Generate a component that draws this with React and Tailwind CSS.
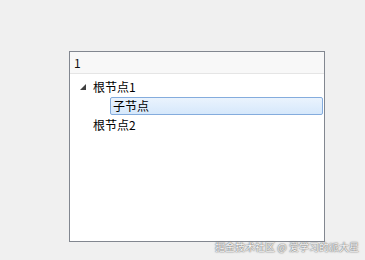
const FONT = { fontFamily: '"Noto Sans CJK SC", "Noto Sans", sans-serif' };

function Caret() {
  return (
    <svg width="6" height="6" viewBox="0 0 6 6" className="block">
      <path d="M6 0 L6 6 L0 6 Z" fill="#404040" />
    </svg>
  );
}

function TreeRow({ label, depth = 0, expanded, selected }) {
  return (
    <div className="flex h-[18px] items-center" style={{ paddingLeft: depth * 17 }}>
      <div className="flex w-[23px] justify-center pl-[2px]">{expanded && <Caret />}</div>
      <div
        className={
          selected
            ? 'flex h-[18px] flex-1 items-center rounded-[2px] border border-[#84acdd] bg-gradient-to-b from-[#eaf3fd] to-[#d6e8fb] pl-[2px] text-black'
            : 'flex h-[18px] items-center text-black'
        }
      >
        {label}
      </div>
    </div>
  );
}

export default function App() {
  return (
    <div className="relative h-[260px] w-[365px] bg-[#f0f0f0] text-[12px]" style={FONT}>
      <div className="absolute left-[69px] top-[51px] flex h-[191px] w-[256px] flex-col border border-[#828790] bg-white">
        <div className="flex h-[22px] items-center border-b border-[#e5e5e5] bg-[#f8f8f8] pl-[4px] text-[12px] text-[#111]">
          1
        </div>
        <div className="flex flex-col pr-[1px] pt-[4px]">
          <TreeRow label="根节点1" expanded />
          <div className="py-[1px]">
            <TreeRow label="子节点" depth={1} selected />
          </div>
          <TreeRow label="根节点2" />
        </div>
      </div>
      <div
        className="absolute left-[215px] top-[239px] whitespace-nowrap text-[10px] text-[#f4f4f4]"
        style={{ textShadow: '0 0 2px #777, 0 0 1px #555' }}
      >
        掘金技术社区 @ 爱学习的派大星
      </div>
    </div>
  );
}
